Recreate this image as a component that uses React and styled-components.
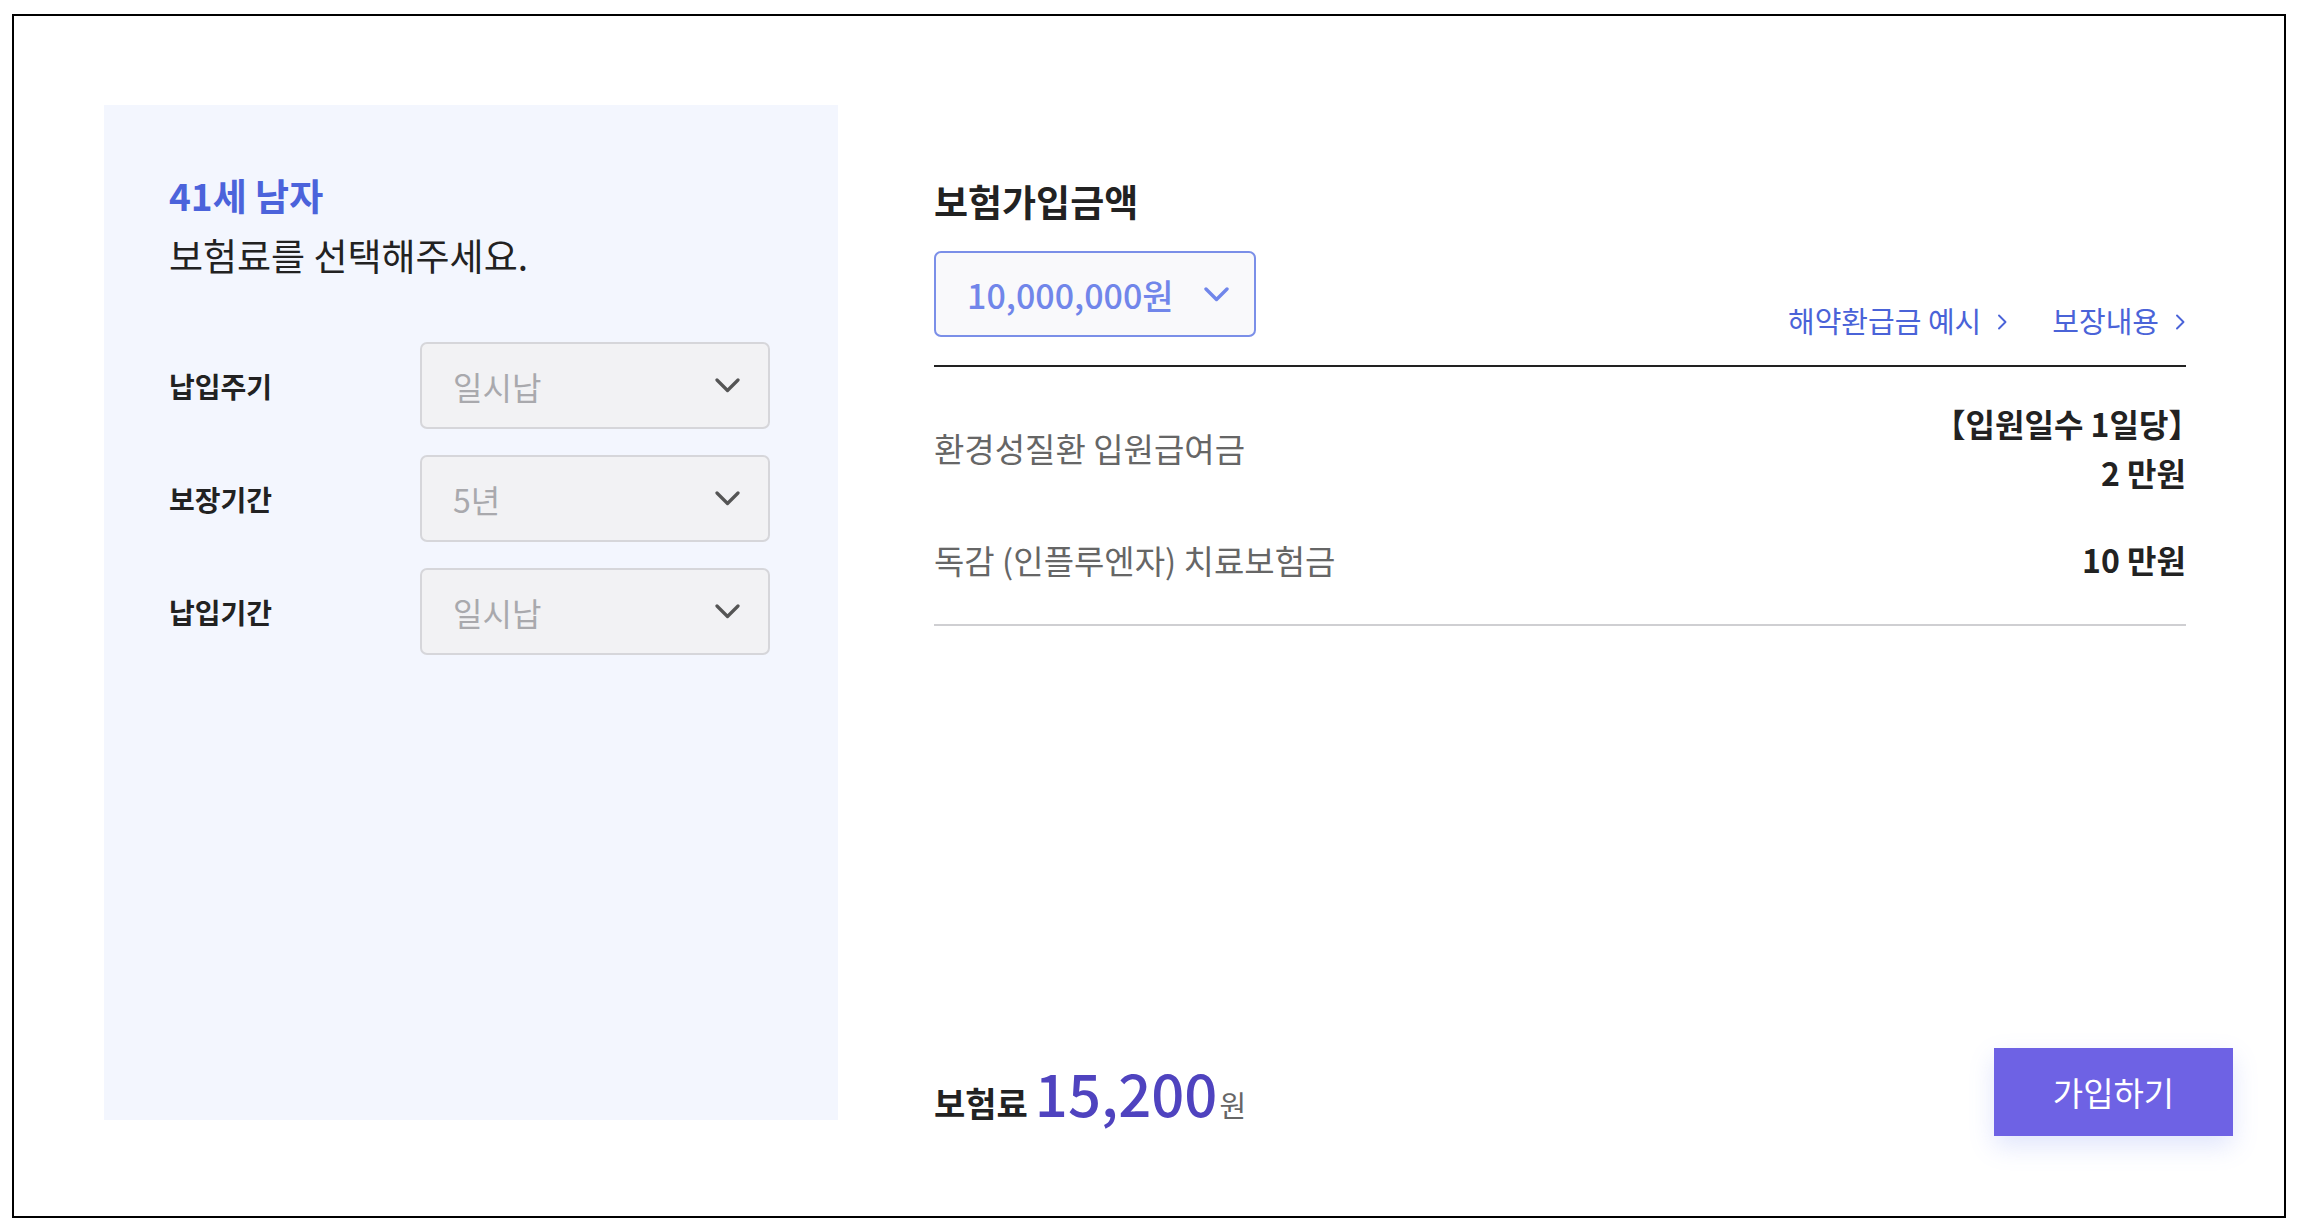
import styled, { createGlobalStyle } from 'styled-components';

const GlobalStyle = createGlobalStyle`
  * { box-sizing: border-box; }
  body {
    margin: 0;
    background: #fff;
    font-family: "Noto Sans CJK KR", "Noto Sans", sans-serif;
    color: #222;
  }
`;

const Chevron = ({ color = '#555', width = 25, height = 15, stroke = 3 }) => (
  <svg width={width} height={height} viewBox="0 0 25 15" fill="none">
    <path d="M2 2 L12.5 12.5 L23 2" stroke={color} strokeWidth={stroke} strokeLinecap="round" strokeLinejoin="round" />
  </svg>
);

const LinkArrow = () => (
  <svg width="12" height="16" viewBox="0 0 12 16" fill="none">
    <path d="M3 1.5 L9.5 8 L3 14.5" stroke="#4a63d8" strokeWidth="1.9" strokeLinecap="round" strokeLinejoin="round" />
  </svg>
);

const selectRows = [
  { label: '납입주기', value: '일시납' },
  { label: '보장기간', value: '5년' },
  { label: '납입기간', value: '일시납' },
];

const App = () => {
  return (
    <>
      <GlobalStyle />
      <Frame>
        <SidePanel>
          <Who>41세 남자</Who>
          <Guide>보험료를 선택해주세요.</Guide>
          <OptionList>
            {selectRows.map((row) => (
              <OptionRow key={row.label}>
                <OptionLabel>{row.label}</OptionLabel>
                <SelectBox>
                  <SelectValue>{row.value}</SelectValue>
                  <Chevron stroke={3.2} />
                </SelectBox>
              </OptionRow>
            ))}
          </OptionList>
        </SidePanel>

        <MainColumn>
          <Content>
            <SectionTitle>보험가입금액</SectionTitle>
            <AmountBar>
              <AmountSelect>
                <AmountValue>10,000,000원</AmountValue>
                <Chevron color="#7186ea" width={25} height={15} stroke={3.4} />
              </AmountSelect>
              <Links>
                <TextLink>해약환급금 예시<LinkArrow /></TextLink>
                <TextLink>보장내용<LinkArrow /></TextLink>
              </Links>
            </AmountBar>
            <CoverList>
              <CoverRow>
                <CoverName>환경성질환 입원급여금</CoverName>
                <CoverAmount>
                  <OpenBracket>【</OpenBracket>입원일수 1일당<CloseBracket>】</CloseBracket>
                  <br />2 만원
                </CoverAmount>
              </CoverRow>
              <CoverRow>
                <CoverName>독감 (인플루엔자) 치료보험금</CoverName>
                <CoverAmount>10 만원</CoverAmount>
              </CoverRow>
            </CoverList>
          </Content>

          <Footer>
            <Premium>
              <PremiumLabel>보험료</PremiumLabel>
              <PremiumValue>15,200</PremiumValue>
              <PremiumUnit>원</PremiumUnit>
            </Premium>
            <JoinButton>가입하기</JoinButton>
          </Footer>
        </MainColumn>
      </Frame>
    </>
  );
};

export default App;

const Frame = styled.div`
  margin: 14px 14px 14px 12px;
  height: 1204px;
  border: 2px solid #000;
  display: flex;
  align-items: flex-start;
  padding: 89px 51px 0 90px;
`;

const SidePanel = styled.div`
  width: 734px;
  height: 1015px;
  flex-shrink: 0;
  background: #f3f6fe;
  padding: 60px 65px 0 65px;
`;

const Who = styled.div`
  font-size: 37px;
  line-height: 60px;
  font-weight: 700;
  color: #4b63db;
`;

const Guide = styled.div`
  font-size: 37px;
  line-height: 60px;
  font-weight: 400;
  color: #222;
`;

const OptionList = styled.div`
  margin-top: 57px;
  display: flex;
  flex-direction: column;
  gap: 26px;
`;

const OptionRow = styled.div`
  display: flex;
  align-items: center;
`;

const OptionLabel = styled.div`
  width: 251px;
  font-size: 28px;
  font-weight: 700;
  color: #222;
`;

const SelectBox = styled.div`
  width: 350px;
  height: 87px;
  background: #f2f2f4;
  border: 2px solid #d6d6da;
  border-radius: 7px;
  display: flex;
  align-items: center;
  justify-content: space-between;
  padding: 0 28px 0 31px;
`;

const SelectValue = styled.span`
  font-size: 32px;
  color: #a9a9ad;
`;

const MainColumn = styled.div`
  flex: 1;
  margin-left: 96px;
  height: 1031px;
  display: flex;
  flex-direction: column;
`;

const Content = styled.div`
  padding: 72px 47px 0 0;
`;

const SectionTitle = styled.div`
  font-size: 37px;
  line-height: 48px;
  font-weight: 700;
  color: #222;
`;

const AmountBar = styled.div`
  margin-top: 26px;
  display: flex;
  align-items: flex-end;
  justify-content: space-between;
  padding-bottom: 28px;
  border-bottom: 2px solid #222;
`;

const AmountSelect = styled.div`
  width: 322px;
  height: 86px;
  border: 2px solid #7b8fe8;
  border-radius: 7px;
  background: #f9f9fb;
  display: flex;
  align-items: center;
  gap: 30px;
  padding: 0 0 0 31px;
`;

const AmountValue = styled.span`
  font-size: 34px;
  font-weight: 500;
  color: #7186ea;
`;

const Links = styled.div`
  display: flex;
  gap: 44px;
`;

const TextLink = styled.a`
  display: flex;
  align-items: center;
  gap: 15px;
  font-size: 29px;
  line-height: 34px;
  color: #4a63d8;
  cursor: pointer;
  white-space: nowrap;
  svg { margin-top: 3px; }
`;

const CoverList = styled.div`
  display: flex;
  flex-direction: column;
  gap: 38px;
  padding: 32px 0 40px;
  border-bottom: 2px solid #cfcfd2;
`;

const CoverRow = styled.div`
  display: flex;
  align-items: center;
  justify-content: space-between;
`;

const CoverName = styled.div`
  font-size: 33px;
  color: #666;
`;

const CoverAmount = styled.div`
  font-size: 32px;
  line-height: 49px;
  font-weight: 700;
  color: #222;
  text-align: right;
  white-space: nowrap;
`;

const OpenBracket = styled.span`
  margin-left: -0.45em;
`;

const CloseBracket = styled.span`
  margin-right: -0.45em;
`;

const Footer = styled.div`
  margin-top: auto;
  display: flex;
  align-items: center;
  justify-content: space-between;
`;

const Premium = styled.div`
  display: flex;
  align-items: baseline;
  margin-top: 6px;
`;

const PremiumLabel = styled.span`
  font-size: 34px;
  font-weight: 700;
  color: #222;
  margin-right: 7px;
`;

const PremiumValue = styled.span`
  font-size: 58px;
  font-weight: 500;
  color: #4f43bf;
  line-height: 1;
`;

const PremiumUnit = styled.span`
  font-size: 29px;
  color: #666;
  margin-left: 2px;
`;

const JoinButton = styled.button`
  width: 239px;
  height: 88px;
  border: none;
  background: #6e62e4;
  color: #fff;
  font-family: "Noto Sans CJK KR", "Noto Sans", sans-serif;
  font-size: 33px;
  font-weight: 400;
  box-shadow: 0 10px 24px rgba(100, 125, 240, 0.2);
  cursor: pointer;
`;
